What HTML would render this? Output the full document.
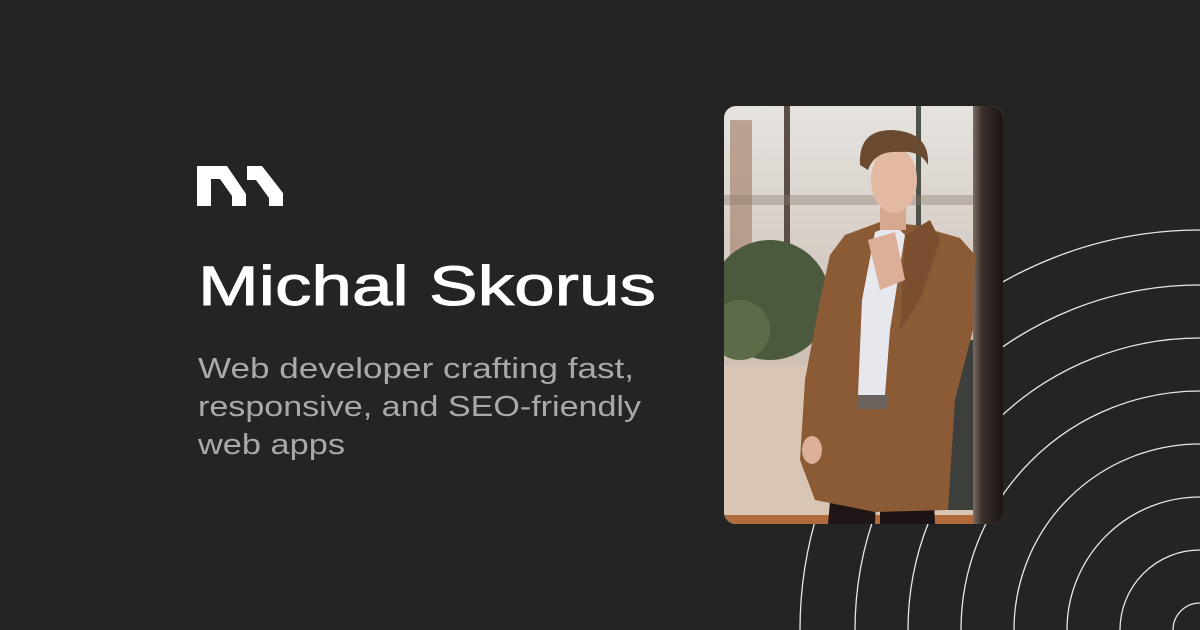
<!DOCTYPE html>
<html><head><meta charset="utf-8"><style>
html,body{margin:0;padding:0;background:#242424;width:1200px;height:630px;overflow:hidden}
svg{display:block;position:absolute;left:0;top:0}
</style></head><body>
<svg width="1200" height="630" viewBox="0 0 1200 630" xmlns="http://www.w3.org/2000/svg">
<defs>
<clipPath id="pc"><rect x="724" y="106" width="279" height="418" rx="12"/></clipPath>
<linearGradient id="bg" x1="0" y1="0" x2="0" y2="1">
<stop offset="0" stop-color="#e6e3df"/><stop offset="0.5" stop-color="#cfc4ba"/><stop offset="1" stop-color="#c7b6a6"/></linearGradient>
<linearGradient id="pil" x1="0" y1="0" x2="1" y2="0">
<stop offset="0" stop-color="#7a6d64"/><stop offset="0.3" stop-color="#3a302c"/><stop offset="1" stop-color="#1a1412"/></linearGradient>
</defs>
<g fill="none" stroke="#e8e8e8" stroke-width="1.3">
<circle cx="1200" cy="630" r="27"/><circle cx="1200" cy="630" r="80"/><circle cx="1200" cy="630" r="133"/><circle cx="1200" cy="630" r="186"/><circle cx="1200" cy="630" r="239"/><circle cx="1200" cy="630" r="292"/><circle cx="1200" cy="630" r="345"/><circle cx="1200" cy="630" r="400"/>
</g>
<rect x="724" y="106" width="279" height="418" rx="12" fill="#242424"/>
<g clip-path="url(#pc)">
<rect x="724" y="106" width="279" height="418" fill="url(#bg)"/>
<rect x="730" y="120" width="22" height="140" fill="#a98870" opacity="0.7"/>
<rect x="784" y="106" width="6" height="150" fill="#5a4e46"/>
<rect x="916" y="106" width="5" height="120" fill="#4c5048"/>
<rect x="724" y="195" width="250" height="10" fill="#8a7a6e" opacity="0.4"/>
<ellipse cx="770" cy="300" rx="60" ry="60" fill="#4b5a3c"/>
<ellipse cx="740" cy="330" rx="30" ry="30" fill="#5d6b48"/>
<rect x="724" y="365" width="250" height="160" fill="#d8c5b3"/>
<rect x="724" y="515" width="250" height="10" fill="#b06a3c"/>
<rect x="940" y="340" width="35" height="170" fill="#3c3f3c"/>
<rect x="973" y="106" width="30" height="418" fill="url(#pil)"/>
<polygon points="880,400 930,400 935,524 880,524" fill="#1c1414"/>
<polygon points="840,390 880,395 875,524 828,524" fill="#1e1616"/>
<polygon points="845,235 880,222 915,225 960,238 975,255 973,330 955,400 948,510 875,512 840,505 815,500 800,460 805,380 820,300 830,255" fill="#8b5b36"/>
<polygon points="875,232 895,225 905,235 890,330 885,395 858,395 862,300" fill="#e6e8ee"/>
<polygon points="905,235 930,220 940,240 920,300 900,330" fill="#7a4e2e"/>
<polygon points="868,240 895,232 905,280 880,290" fill="#dcb098"/>
<rect x="858" y="395" width="30" height="14" fill="#6a625c"/>
<rect x="880" y="200" width="26" height="30" fill="#d6a890"/>
<ellipse cx="894" cy="180" rx="23" ry="33" fill="#e2b9a2"/>
<path d="M860,165 Q858,130 892,130 Q930,132 928,165 Q920,150 900,152 Q875,150 868,170 Z" fill="#6b4a32"/>
<ellipse cx="812" cy="450" rx="10" ry="14" fill="#dcb098"/>
</g>
<polygon points="197,166 227,166 246,194 246,206 232,206 232,196 220,179 211,179 211,206 197,206" fill="#fff"/>
<polygon points="247,166 262,166 283,193 283,206 269,206 269,198 256,180 247,180" fill="#fff"/>
<text x="198" y="305" font-family="Liberation Sans, sans-serif" font-size="56" fill="#fff" stroke="#fff" stroke-width="0.9" textLength="458" lengthAdjust="spacingAndGlyphs">Michal Skorus</text>
<g font-family="Liberation Sans, sans-serif" font-size="29" fill="#a9a9a9">
<text x="198" y="378" textLength="436" lengthAdjust="spacingAndGlyphs">Web developer crafting fast,</text>
<text x="198" y="416" textLength="443" lengthAdjust="spacingAndGlyphs">responsive, and SEO-friendly</text>
<text x="198" y="454" textLength="147" lengthAdjust="spacingAndGlyphs">web apps</text>
</g>
</svg>
</body></html>
